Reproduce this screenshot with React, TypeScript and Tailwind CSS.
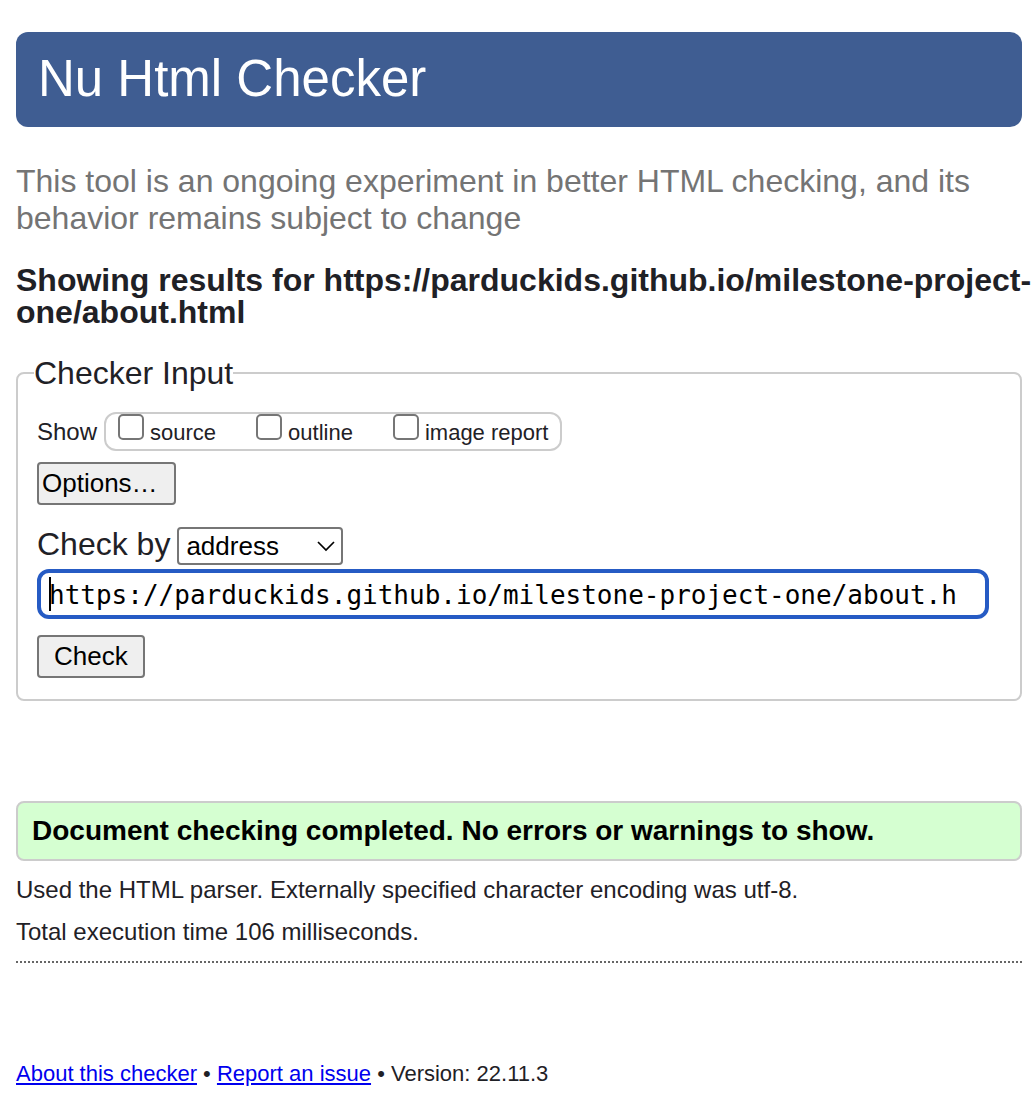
import { useState } from "react";

const checks = ["source", "outline", "image report"];

export default function App() {
  const [url, setUrl] = useState("https://parduckids.github.io/milestone-project-one/about.html");
  return (
    <main className="overflow-x-hidden bg-white pt-8 pb-6 pl-4 font-['Liberation_Sans',Arial,sans-serif] text-[#1f2126]">
      <header className="mr-3 rounded-xl bg-[#3f5d92] px-[22px] pt-[17px] pb-[18px]">
        <h1 className="text-[51px] leading-[60px] text-white">Nu Html Checker</h1>
      </header>
      <p className="mt-9 text-[32px] leading-[37px] text-[#747474]">
        This tool is an ongoing experiment in better HTML checking, and its behavior remains subject to change
      </p>
      <h2 className="mt-[27px] text-[32px] leading-8 font-bold">
        Showing results for https://parduckids.github.io/milestone-project-one/about.html
      </h2>
      <form onSubmit={(e) => e.preventDefault()}>
        <fieldset className="mt-[27px] mr-3 rounded-lg border-2 border-[#cccccc] px-[19px] pb-[21px]">
          <legend className="-ml-[3px] text-[32px] leading-9">Checker Input</legend>
          <div className="mt-[21px] flex items-center text-2xl">
            <span className="mr-[7px]">Show</span>
            <div className="flex h-[39px] gap-10 rounded-xl border-2 border-[#cccccc] px-3 text-[22px] leading-[37px]">
              {checks.map((c) => (
                <label key={c} className="flex gap-[6px]">
                  <input type="checkbox" className="size-[26px] appearance-none rounded-[5px] border-2 border-[#767676] bg-white checked:bg-[#767676]" />
                  {c}
                </label>
              ))}
            </div>
          </div>
          <button type="button" className="mt-[11px] block h-[43px] rounded border-2 border-[#767676] bg-[#efefef] pr-4 pb-[2px] pl-[3px] text-[26px] leading-9 text-black">
            Options…
          </button>
          <div className="mt-[22px] flex items-start">
            <label htmlFor="docselect" className="mr-[7px] text-[32px] leading-[34px]">Check by</label>
            <div className="relative">
              <select id="docselect" className="block h-[38px] w-[166px] appearance-none rounded border-2 border-[#767676] bg-white pl-[7px] text-[26px] leading-[34px] text-black">
                <option>address</option>
                <option>file upload</option>
                <option>text input</option>
              </select>
              <svg className="pointer-events-none absolute top-[13px] right-2 h-3 w-[18px]" viewBox="0 0 18 12" fill="none" stroke="black" strokeWidth="1.7">
                <path d="M1 2 L9 10 L17 2" />
              </svg>
            </div>
          </div>
          <div className="relative mt-1 mr-3">
            <input
              aria-label="Document address"
              value={url}
              onChange={(e) => setUrl(e.target.value)}
              className="block h-[50px] w-full rounded-xl border-4 border-[#265bc4] bg-white pt-[2px] pr-7 pl-2 font-['DejaVu_Sans_Mono',monospace] text-[26px] text-black outline-none"
            />
            <span className="absolute top-2 left-3 h-[34px] w-[2px] bg-black" />
          </div>
          <button type="submit" className="mt-4 block h-[43px] rounded border-2 border-[#767676] bg-[#efefef] px-[15px] pb-[2px] text-[26px] leading-9 text-black">
            Check
          </button>
        </fieldset>
      </form>
      <section className="mt-[100px] mr-3">
        <p className="rounded-lg border-2 border-[#cccccc] bg-[#d5ffd1] px-[14px] py-3 text-[28px] leading-8 font-bold text-black">
          Document checking completed. No errors or warnings to show.
        </p>
        <p className="mt-[15px] text-2xl leading-7">Used the HTML parser. Externally specified character encoding was utf-8.</p>
        <p className="mt-[14px] text-2xl leading-7">Total execution time 106 milliseconds.</p>
        <hr className="mt-[15px] border-t-2 border-dotted border-[#666666]" />
      </section>
      <footer className="mt-[97px] text-[22px] leading-7">
        <a href="#about" className="text-[#0000ee] underline">About this checker</a> •{" "}
        <a href="#issue" className="text-[#0000ee] underline">Report an issue</a> • Version: 22.11.3
      </footer>
    </main>
  );
}
